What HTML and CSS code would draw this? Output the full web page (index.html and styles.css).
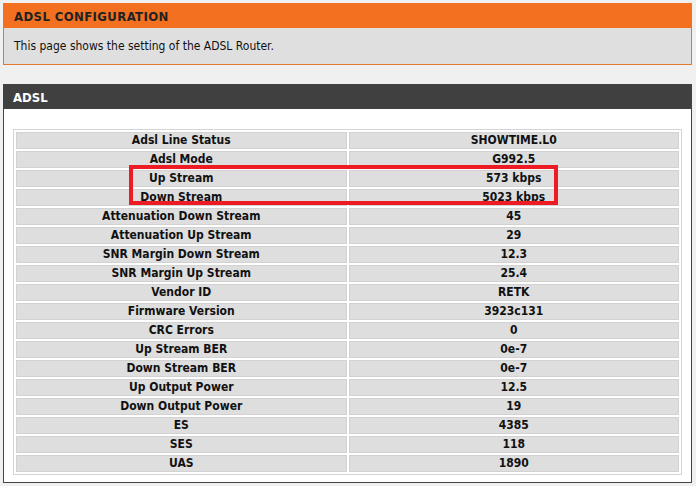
FILE: index.html
```html
<!DOCTYPE html>
<html lang="en">
<head>
  <meta charset="UTF-8" />
  <title>ADSL Configuration</title>
  <link rel="stylesheet" href="styles.css">
</head>
<body>
  <div class="config-box">
    <div class="config-title">ADSL CONFIGURATION</div>
    <div class="config-info">This page shows the setting of the ADSL Router.</div>
  </div>

  <div class="status-box">
    <div class="status-title">ADSL</div>
    <div class="status-body">
      <div class="table-wrap">
        <table class="status-table">
          <tr><td>Adsl Line Status</td><td>SHOWTIME.L0</td></tr>
          <tr><td>Adsl Mode</td><td>G992.5</td></tr>
          <tr><td>Up Stream</td><td>573 kbps</td></tr>
          <tr><td>Down Stream</td><td>5023 kbps</td></tr>
          <tr><td>Attenuation Down Stream</td><td>45</td></tr>
          <tr><td>Attenuation Up Stream</td><td>29</td></tr>
          <tr><td>SNR Margin Down Stream</td><td>12.3</td></tr>
          <tr><td>SNR Margin Up Stream</td><td>25.4</td></tr>
          <tr><td>Vendor ID</td><td>RETK</td></tr>
          <tr><td>Firmware Version</td><td>3923c131</td></tr>
          <tr><td>CRC Errors</td><td>0</td></tr>
          <tr><td>Up Stream BER</td><td>0e-7</td></tr>
          <tr><td>Down Stream BER</td><td>0e-7</td></tr>
          <tr><td>Up Output Power</td><td>12.5</td></tr>
          <tr><td>Down Output Power</td><td>19</td></tr>
          <tr><td>ES</td><td>4385</td></tr>
          <tr><td>SES</td><td>118</td></tr>
          <tr><td>UAS</td><td>1890</td></tr>
        </table>
        <!-- highlight around the stream rates -->
        <div class="highlight"></div>
      </div>
    </div>
  </div>
</body>
</html>
```

FILE: styles.css
```css
* {
  margin: 0;
  padding: 0;
  box-sizing: border-box;
}

body {
  font-family: "DejaVu Sans Condensed", "DejaVu Sans", sans-serif;
  font-size: 12px;
  color: #111;
  background: #f0f0f0;
  padding: 3px 4px 3px 3px;
}

/* top info block */
.config-box {
  margin-bottom: 19px;
}

.config-title {
  background: #f37021;
  color: #222;
  font-weight: bold;
  font-size: 13px;
  letter-spacing: 0.4px;
  height: 25px;
  line-height: 27px;
  padding-left: 11px;
}

.config-info {
  background: #dfdfdf;
  border: 1px solid #e0792e;
  border-top: none;
  height: 37px;
  line-height: 36px;
  padding-left: 10px;
  font-size: 12px;
}

/* adsl status block */
.status-title {
  background: #404040;
  color: #fff;
  font-weight: bold;
  font-size: 13px;
  height: 25px;
  line-height: 27px;
  padding-left: 10px;
}

.status-body {
  background: #fff;
  border: 1px solid #444;
  border-top: none;
  padding: 20px 9px 7px 9px;
}

.table-wrap {
  position: relative;
}

.status-table {
  width: 100%;
  border: 1px solid #d4d4d4;
  border-spacing: 2px;
  table-layout: fixed;
}

.status-table td {
  width: 50%;
  background: #dedede;
  border: 1px solid #d2d2d2;
  height: 17px;
  line-height: 15px;
  text-align: center;
  font-weight: bold;
  font-size: 12px;
  color: #111;
}

.highlight {
  position: absolute;
  left: 116px;
  top: 36px;
  width: 429px;
  height: 40px;
  border: 4px solid #ed1c24;
}
```
